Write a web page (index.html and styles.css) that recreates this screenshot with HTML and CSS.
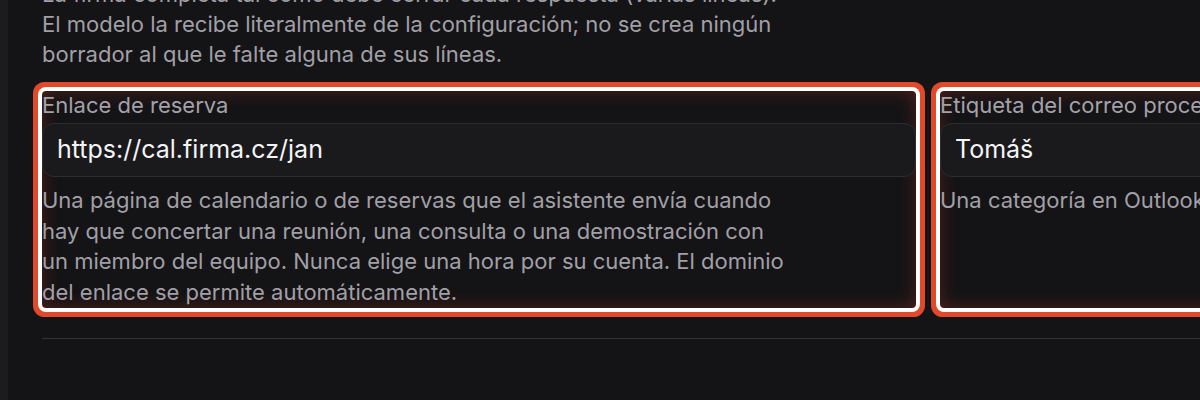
FILE: index.html
```html
<!DOCTYPE html>
<html lang="es">
<head>
<meta charset="utf-8">
<title>Configuración</title>
<link rel="stylesheet" href="styles.css">
</head>
<body>
<div class="app">
  <aside class="rail"></aside>
  <main class="content">
    <p class="intro">La firma completa tal como debe cerrar cada respuesta (varias líneas). El modelo la recibe literalmente de la configuración; no se crea ningún borrador al que le falte alguna de sus líneas.</p>
    <div class="row">
      <div class="field hl">
        <label class="label" for="booking">Enlace de reserva</label>
        <input class="input" id="booking" type="text" value="https://cal.firma.cz/jan">
        <p class="help">Una página de calendario o de reservas que el asistente envía cuando hay que concertar una reunión, una consulta o una demostración con un miembro del equipo. Nunca elige una hora por su cuenta. El dominio del enlace se permite automáticamente.</p>
      </div>
      <div class="field hl">
        <label class="label" for="tag">Etiqueta del correo procesado</label>
        <input class="input" id="tag" type="text" value="Tomáš">
        <p class="help">Una categoría en Outlook que se asigna a los correos procesados.</p>
      </div>
    </div>
    <hr class="divider">
  </main>
</div>
</body>
</html>
```
FILE: styles.css
```css
* { box-sizing: border-box; }
html, body {
  margin: 0;
  height: 100%;
  background: #141316;
}
body {
  font-family: Inter, "Noto Sans", sans-serif;
  color: #a1a0a6;
  overflow: hidden;
}
.app {
  display: flex;
  width: 1200px;
  height: 400px;
  overflow: hidden;
}
.rail {
  flex: 0 0 8px;
  background: #1c1b1e;
}
.content {
  flex: 1 1 auto;
  padding-left: 34px;
  min-width: 0;
}
.intro {
  margin: -21px 0 0;
  max-width: 750px;
  font-size: 22px;
  line-height: 30px;
}
.row {
  display: grid;
  grid-template-columns: 874px 874px;
  column-gap: 24px;
  margin-top: 22px;
}
.field {
  display: flex;
  flex-direction: column;
  padding-bottom: 1px;
  border-radius: 4px;
}
.hl {
  box-shadow:
    0 0 0 4px #ffffff,
    0 0 0 9px #e04a2b,
    inset 0 0 18px rgba(220, 70, 40, 0.3);
}
.label {
  font-size: 22px;
  line-height: 28px;
  margin-bottom: 4px;
  color: #a3a2a8;
}
.input {
  appearance: none;
  height: 54px;
  width: 100%;
  border: 1px solid #2d2c30;
  border-radius: 12px;
  background: #1a191c;
  color: #f4f4f5;
  font-family: Inter, "Noto Sans", sans-serif;
  font-size: 25px;
  padding: 0 14px 3px;
  outline: none;
}
.help {
  margin: 8px 0 0;
  max-width: 750px;
  font-size: 22px;
  line-height: 30.5px;
}
.divider {
  margin: 30px 0 0;
  border: 0;
  height: 1px;
  background: #333236;
}
```
